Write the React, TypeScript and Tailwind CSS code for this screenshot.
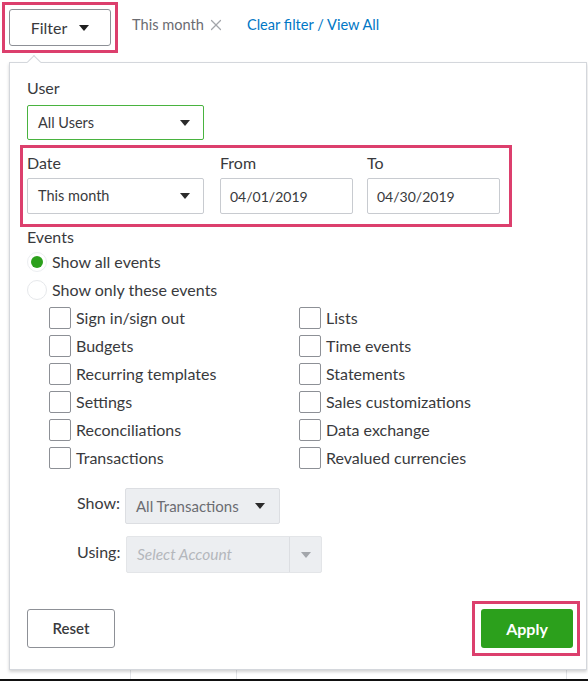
import { X } from "lucide-react";

const LEFT_EVENTS = ["Sign in/sign out", "Budgets", "Recurring templates", "Settings", "Reconciliations", "Transactions"];
const RIGHT_EVENTS = ["Lists", "Time events", "Statements", "Sales customizations", "Data exchange", "Revalued currencies"];

function Caret({ className = "" }: { className?: string }) {
  return (
    <svg width="10" height="6" viewBox="0 0 10 6" className={className}>
      <path d="M0 0 L10 0 L5 6 Z" fill="currentColor" />
    </svg>
  );
}

function Checkbox({ label }: { label: string }) {
  return (
    <div className="flex h-[28px] items-center">
      <span className="h-[22px] w-[22px] rounded-[2px] border border-[#8d9096] bg-white" />
      <span className="ml-[5px] text-[16px] text-[#393a3d]">{label}</span>
    </div>
  );
}

export default function App() {
  return (
    <div className="relative h-[681px] w-[588px] overflow-hidden bg-white pl-[2px] pt-[2px] font-['Lato','Open_Sans',sans-serif] text-[#393a3d]">
      {/* top bar */}
      <div className="flex items-start">
        <div className="border-[3px] border-[#dc3f6d] p-[4px]">
          <button
            type="button"
            className="flex h-[37px] w-[102px] items-center justify-center gap-[12px] rounded-[3px] border border-[#8d9096] bg-white text-[16px] text-[#393a3d]"
          >
            Filter
            <Caret className="text-[#1f1f1f]" />
          </button>
        </div>
        <div className="ml-[14px] mt-[12px] flex items-center text-[14.6px] text-[#6b6c72]">
          This month
          <X className="ml-[3px] h-[18px] w-[18px] text-[#a3a6ab]" strokeWidth={1.6} />
          <span className="ml-[22px] text-[#0077c5]">Clear filter / View All</span>
        </div>
      </div>

      {/* panel */}
      <div className="relative ml-[7px] mt-[9px] h-[608px] w-[578px] border border-[#d4d7dc] bg-white px-[17px] pt-[15px] shadow-[0_2px_3px_rgba(0,0,0,0.18)]">
        <span className="absolute -top-[6px] left-[19px] h-[10px] w-[10px] rotate-45 border-l border-t border-[#d4d7dc] bg-white" />

        <div className="text-[16px] leading-[20px]">User</div>
        <div className="mt-[7px] flex h-[35px] w-[177px] items-center justify-between rounded-[2px] border border-[#49b33f] px-[10px] text-[14.5px]">
          All Users
          <Caret className="mr-[3px] text-[#2b2b2b]" />
        </div>

        <div className="-ml-[7px] mt-[5px] flex w-[492px] gap-[16px] border-[3px] border-[#dc3f6d] pb-[10px] pl-[4px] pt-[5px]">
          <div>
            <div className="text-[16px] leading-[20px]">Date</div>
            <div className="mt-[5px] flex h-[36px] w-[177px] items-center justify-between rounded-[2px] border border-[#c8cbd0] px-[10px] text-[14.5px]">
              This month
              <Caret className="mr-[3px] text-[#2b2b2b]" />
            </div>
          </div>
          <div>
            <div className="text-[16px] leading-[20px]">From</div>
            <div className="mt-[5px] flex h-[36px] w-[133px] items-center rounded-[2px] border border-[#c8cbd0] px-[9px] text-[14px]">
              04/01/2019
            </div>
          </div>
          <div className="-ml-[2px]">
            <div className="text-[16px] leading-[20px]">To</div>
            <div className="mt-[5px] flex h-[36px] w-[133px] items-center rounded-[2px] border border-[#c8cbd0] px-[9px] text-[14px]">
              04/30/2019
            </div>
          </div>
        </div>

        <div className="text-[16px] leading-[20px]">Events</div>
        <div className="mt-[1px]">
          <div className="flex h-[28px] items-center">
            <span className="flex h-[20px] w-[20px] items-center justify-center rounded-full border border-[#eceef1] bg-white">
              <span className="h-[12px] w-[12px] rounded-full bg-[#2ca01c]" />
            </span>
            <span className="ml-[5px] text-[16px]">Show all events</span>
          </div>
          <div className="flex h-[28px] items-center">
            <span className="h-[20px] w-[20px] rounded-full border border-[#e6e8eb] bg-white" />
            <span className="ml-[5px] text-[16px]">Show only these events</span>
          </div>
        </div>

        <div className="ml-[22px] grid w-[450px] grid-cols-[250px_200px]">
          <div>
            {LEFT_EVENTS.map((e) => (
              <Checkbox key={e} label={e} />
            ))}
          </div>
          <div>
            {RIGHT_EVENTS.map((e) => (
              <Checkbox key={e} label={e} />
            ))}
          </div>
        </div>

        <div className="ml-[50px] mt-[16px] flex items-start">
          <span className="w-[48px] pt-[5px] text-[16px] leading-[20px]">Show:</span>
          <div className="flex h-[36px] w-[155px] items-center justify-between rounded-[2px] border border-[#dcdee2] bg-[#eceef1] pl-[10px] pr-[14px] text-[15px] text-[#6b6c72]">
            All Transactions
            <Caret className="text-[#2b2b2b]" />
          </div>
        </div>
        <div className="ml-[50px] mt-[12px] flex items-start">
          <span className="w-[49px] pt-[6px] text-[16px] leading-[20px]">Using:</span>
          <div className="flex h-[37px] w-[196px] items-stretch rounded-[2px] border border-[#e3e5e8] bg-[#eceef1] text-[15.5px]">
            <span className="flex w-[163px] items-center border-r border-[#dcdee2] pl-[10px] italic text-[#b4b7bc]">
              Select Account
            </span>
            <span className="flex flex-1 items-center justify-center">
              <Caret className="text-[#a3a6ab]" />
            </span>
          </div>
        </div>

        <div className="-mr-[11px] mt-[28px] flex items-center justify-between">
          <button
            type="button"
            className="h-[39px] w-[88px] rounded-[3px] border border-[#8d9096] bg-white text-[15px] font-semibold text-[#393a3d]"
          >
            Reset
          </button>
          <div className="border-[3px] border-[#dc3f6d] pb-[5px] pl-[6px] pr-[4px] pt-[5px]">
            <button
              type="button"
              className="h-[39px] w-[92px] rounded-[3px] bg-[#2ca01c] text-[16px] font-bold text-white"
            >
              Apply
            </button>
          </div>
        </div>
      </div>

      {/* table edge below the popover */}
      <div className="-ml-[2px] flex h-[11px] w-[588px] border-b-[2px] border-[#111]">
        <span className="w-[131px] border-r border-[#e3e5e8]" />
        <span className="w-[106px] border-r border-[#e3e5e8]" />
        <span className="w-[330px] border-r border-[#e3e5e8]" />
      </div>
    </div>
  );
}
